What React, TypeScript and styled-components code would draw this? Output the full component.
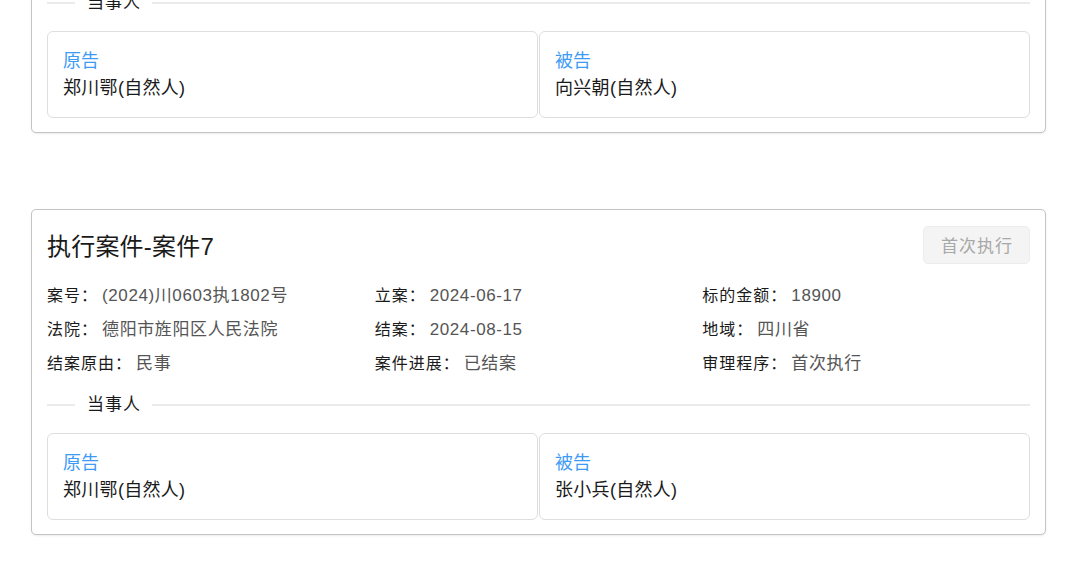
import React from "react";
import styled, { createGlobalStyle } from "styled-components";

const Global = createGlobalStyle`
  html, body { margin: 0; padding: 0; background: #fff; }
  body {
    font-family: "Liberation Sans", "Noto Sans CJK SC", sans-serif;
    color: #222;
    overflow: hidden;
  }
`;

const List = styled.div`
  display: flex;
  flex-direction: column;
  gap: 76px;
  margin-top: -193px;
  padding: 0 32px 40px 31px;
`;

const Card = styled.section`
  border: 1px solid #c4c4c4;
  border-radius: 5px;
  padding: 15px 15px 14px;
  box-shadow: 0 1px 2px rgba(0, 0, 0, 0.08);
  background: #fff;
`;

const Header = styled.div`
  display: flex;
  align-items: center;
  justify-content: space-between;
  height: 39px;
`;

const Title = styled.h2`
  margin: 0;
  font-size: 24px;
  font-weight: 400;
  letter-spacing: 0.2px;
  color: #1a1a1a;
`;

const Tag = styled.button`
  font-family: inherit;
  height: 38px;
  padding: 0 16px 0 17px;
  font-size: 17px;
  letter-spacing: 1px;
  color: #a8a8a8;
  background: #f4f4f4;
  border: 1px solid #ececec;
  border-radius: 5px;
`;

const InfoGrid = styled.div`
  display: grid;
  grid-template-columns: repeat(3, 1fr);
  margin-top: 15px;
`;

const Info = styled.div`
  font-size: 16px;
  line-height: 34px;
  letter-spacing: 1px;
  color: #1a1a1a;
  white-space: nowrap;
`;

const Value = styled.span`
  margin-left: 4px;
  font-size: 17px;
  letter-spacing: 0.6px;
  color: #555;
`;

const Divider = styled.div`
  display: flex;
  align-items: center;
  margin-top: 12px;
  font-size: 17px;
  letter-spacing: 1px;
  line-height: 24px;
  color: #1a1a1a;
  &::before {
    content: "";
    width: 28px;
    border-top: 2px solid #ebebeb;
    margin-right: 12px;
  }
  &::after {
    content: "";
    flex: 1;
    border-top: 2px solid #ebebeb;
    margin-left: 11px;
  }
`;

const Parties = styled.div`
  display: grid;
  grid-template-columns: 1fr 1fr;
  gap: 1px;
  margin-top: 16px;
`;

const Party = styled.div`
  border: 1px solid #dedede;
  border-radius: 6px;
  padding: 16px 15px 15px;
`;

const Role = styled.div`
  font-size: 18px;
  line-height: 26px;
  color: #3e9bf5;
`;

const Name = styled.div`
  font-size: 18px;
  line-height: 28px;
  letter-spacing: 0.3px;
  color: #1a1a1a;
`;

type CaseData = {
  title: string;
  tag: string;
  info: [string, string][];
  parties: [string, string][];
};

const cases: CaseData[] = [
  {
    title: "执行案件-案件6",
    tag: "首次执行",
    info: [
      ["案号", "(2024)川0603执1655号"],
      ["立案", "2024-05-28"],
      ["标的金额", "21500"],
      ["法院", "德阳市旌阳区人民法院"],
      ["结案", "2024-07-30"],
      ["地域", "四川省"],
      ["结案原由", "民事"],
      ["案件进展", "已结案"],
      ["审理程序", "首次执行"],
    ],
    parties: [
      ["原告", "郑川鄂(自然人)"],
      ["被告", "向兴朝(自然人)"],
    ],
  },
  {
    title: "执行案件-案件7",
    tag: "首次执行",
    info: [
      ["案号", "(2024)川0603执1802号"],
      ["立案", "2024-06-17"],
      ["标的金额", "18900"],
      ["法院", "德阳市旌阳区人民法院"],
      ["结案", "2024-08-15"],
      ["地域", "四川省"],
      ["结案原由", "民事"],
      ["案件进展", "已结案"],
      ["审理程序", "首次执行"],
    ],
    parties: [
      ["原告", "郑川鄂(自然人)"],
      ["被告", "张小兵(自然人)"],
    ],
  },
];

export default function App() {
  return (
    <>
      <Global />
      <List>
        {cases.map((c) => (
          <Card key={c.title}>
            <Header>
              <Title>{c.title}</Title>
              <Tag>{c.tag}</Tag>
            </Header>
            <InfoGrid>
              {c.info.map(([k, v]) => (
                <Info key={k}>
                  {k}：<Value>{v}</Value>
                </Info>
              ))}
            </InfoGrid>
            <Divider>当事人</Divider>
            <Parties>
              {c.parties.map(([r, n]) => (
                <Party key={r}>
                  <Role>{r}</Role>
                  <Name>{n}</Name>
                </Party>
              ))}
            </Parties>
          </Card>
        ))}
      </List>
    </>
  );
}
